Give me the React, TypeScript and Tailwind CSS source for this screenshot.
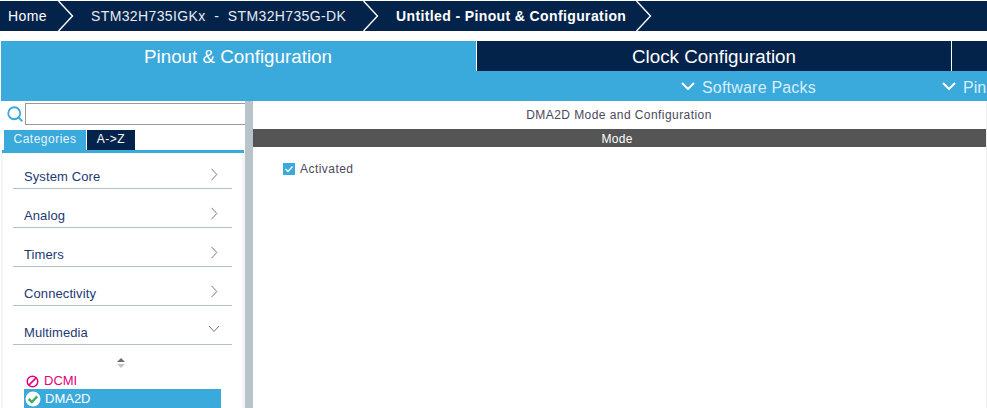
import React from "react";
import { Search } from "lucide-react";

const Crumb = () => (
  <svg width="16" height="30" viewBox="0 0 16 30" className="shrink-0" fill="none">
    <path d="M0.5 0 L14.5 15 L0.5 30" stroke="#ffffff" strokeWidth="1.4" />
  </svg>
);

const Chev = ({ className }: { className: string }) => (
  <svg width="14" height="8" viewBox="0 0 14 8" fill="none" className={className}>
    <path d="M1 1 L7 7 L13 1" stroke="#ffffff" strokeWidth="2" />
  </svg>
);

const Category = ({ label, open }: { label: string; open?: boolean }) => (
  <div className="mx-[13px] w-[219px] h-[39px] border-b border-[#b1bfc6] flex items-end justify-between pb-[2px] pl-[11px]">
    <span className="text-[13px] leading-[18px] tracking-[0.1px] text-[#1c3a72]">{label}</span>
    {open ? (
      <svg width="12" height="8" viewBox="0 0 12 8" fill="none" className="mb-[9px] mr-[12px]">
        <path d="M1 1 L6 6.5 L11 1" stroke="#7a7a7a" strokeWidth="1" />
      </svg>
    ) : (
      <svg width="8" height="13" viewBox="0 0 8 13" fill="none" className="mb-[5px] mr-[14px]">
        <path d="M1.5 0.8 L6.8 6.5 L1.5 12.2" stroke="#7a7a7a" strokeWidth="1" />
      </svg>
    )}
  </div>
);

export default function App() {
  return (
    <div className="w-[987px] h-[408px] overflow-hidden bg-white flex flex-col font-['Liberation_Sans',Arial,sans-serif]">
      <div className="mt-px h-[30px] shrink-0 bg-[#03234b] text-white flex items-center text-[14px] tracking-[0.38px]">
        <span className="ml-[8px] w-[50px]">Home</span>
        <Crumb />
        <span className="ml-[17px] w-[272px] text-[#e6ebf1] whitespace-pre">STM32H735IGKx  -  STM32H735G-DK</span>
        <Crumb />
        <span className="ml-[17px] w-[240px] font-bold whitespace-nowrap">Untitled - Pinout &amp; Configuration</span>
        <Crumb />
      </div>

      <div className="mt-[10px] ml-px h-[30px] shrink-0 flex text-[18.8px] text-white bg-[#3aa9dc]">
        <div className="w-[475px] text-center leading-[32px] pr-[1px]">Pinout &amp; Configuration</div>
        <div className="w-[475px] bg-[#03234b] border-l border-white text-center leading-[32px]">Clock Configuration</div>
        <div className="flex-1 bg-[#03234b] border-l border-white" />
      </div>
      <div className="ml-px h-[30px] shrink-0 bg-[#3aa9dc] text-[#d9eefa] text-[16px] flex items-center">
        <Chev className="ml-[680px] shrink-0" />
        <span className="ml-[7px] mt-[4px] tracking-[0.2px]">Software Packs</span>
        <Chev className="ml-[126px] shrink-0" />
        <span className="ml-[7px] mt-[4px]">Pin</span>
      </div>

      <div className="flex-1 min-h-0 flex">
        <div className="w-[245px] shrink-0 flex flex-col overflow-hidden">
          <div className="h-[22px] mt-[2px] shrink-0 flex items-center">
            <Search size={18} strokeWidth={2.4} className="ml-[6px] text-[#3aa9dc] shrink-0" />
            <div className="ml-[1px] h-[22px] flex-1 border border-r-0 border-[#9a9a9a] bg-white" />
          </div>
          <div className="mt-[5px] ml-[4px] h-[20px] shrink-0 flex gap-px text-[12px] text-[#e8f4fb] tracking-[0.5px]">
            <div className="w-[82px] bg-[#3aa9dc] text-center leading-[19px]">Categories</div>
            <div className="w-[48px] bg-[#03234b] text-center leading-[19px] text-white">A-&gt;Z</div>
          </div>
          <div className="ml-[2px] w-[242px] h-[3px] shrink-0 bg-[#3aa9dc]" />
          <div className="ml-px w-[244px] flex-1 border-l-2 border-r-[3px] border-[#f3f5f6]">
            <div className="-ml-[3px] -mt-[3px]">
              <Category label="System Core" />
              <Category label="Analog" />
              <Category label="Timers" />
              <Category label="Connectivity" />
              <Category label="Multimedia" open />
              <div className="mt-[13px] ml-[116px] w-[10px] flex flex-col items-center gap-[2px]">
                <div className="w-0 h-0 border-x-[4px] border-x-transparent border-b-[4px] border-b-[#6e6e6e]" />
                <div className="w-0 h-0 border-x-[4px] border-x-transparent border-t-[4px] border-t-[#c4c4c4]" />
              </div>
              <div className="mt-[5px] ml-[26px] h-[16px] flex items-center text-[13px] text-[#e5007e]">
                <svg width="13" height="13" viewBox="0 0 13 13" fill="none" className="shrink-0">
                  <circle cx="6.5" cy="6.5" r="5.3" stroke="#e5007e" strokeWidth="1.5" />
                  <path d="M2.9 10.1 L10.1 2.9" stroke="#e5007e" strokeWidth="1.5" />
                </svg>
                <span className="ml-[5px]">DCMI</span>
              </div>
              <div className="ml-[24px] w-[197px] h-[19px] bg-[#3aa9dc] flex items-center text-[13px] text-white">
                <svg width="16" height="16" viewBox="0 0 17 17" fill="none" className="shrink-0 ml-px">
                  <circle cx="8.5" cy="8.5" r="8" fill="#ffffff" />
                  <path d="M4 8.5 L7.3 11.7 L13 5.8" stroke="#3fae6a" strokeWidth="2.6" />
                </svg>
                <span className="ml-[4px]">DMA2D</span>
              </div>
            </div>
          </div>
        </div>

        <div className="w-[8px] shrink-0 bg-[#b9c4ca]" />

        <div className="flex-1 min-w-0 flex flex-col border-r border-[#eeeeee]">
          <div className="h-[28px] shrink-0 flex items-center justify-center text-[12px] tracking-[0.43px] text-[#4a4a5a] pr-[1px]">
            DMA2D Mode and Configuration
          </div>
          <div className="h-[18px] shrink-0 bg-[#545554] text-white text-[12px] tracking-[0.3px] text-center leading-[20px] pr-[5px]">Mode</div>
          <div className="mt-[12px] ml-[30px] flex items-center text-[12px] tracking-[0.45px] text-[#4a4a5a]">
            <div className="w-[12px] h-[12px] bg-[#3aa9dc] flex items-center justify-center">
              <svg width="10" height="10" viewBox="0 0 10 10" fill="none">
                <path d="M1.5 5 L4 7.5 L8.5 2.5" stroke="#ffffff" strokeWidth="1.4" />
              </svg>
            </div>
            <span className="ml-[5px] mt-px">Activated</span>
          </div>
        </div>
      </div>
    </div>
  );
}
